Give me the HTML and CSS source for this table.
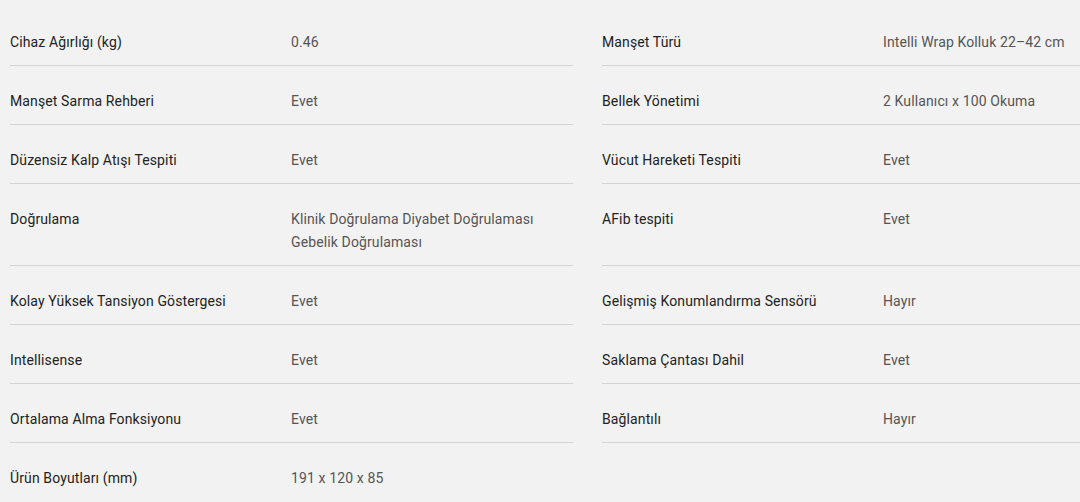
FILE: index.html
```html
<!DOCTYPE html>
<html lang="tr">
<head>
    <meta charset="UTF-8">
    <meta name="viewport" content="width=device-width, initial-scale=1.0">
    <title>Teknik Özellikler</title>
    <link rel="stylesheet" href="styles.css">
</head>
<body>
    <div class="specs">
        <div class="spec-col">
            <div class="spec-row"><div class="spec-label">Cihaz Ağırlığı (kg)</div><div class="spec-value">0.46</div></div>
            <div class="spec-row"><div class="spec-label">Manşet Sarma Rehberi</div><div class="spec-value">Evet</div></div>
            <div class="spec-row"><div class="spec-label">Düzensiz Kalp Atışı Tespiti</div><div class="spec-value">Evet</div></div>
            <div class="spec-row"><div class="spec-label">Doğrulama</div><div class="spec-value">Klinik Doğrulama Diyabet Doğrulaması<br>Gebelik Doğrulaması</div></div>
            <div class="spec-row"><div class="spec-label">Kolay Yüksek Tansiyon Göstergesi</div><div class="spec-value">Evet</div></div>
            <div class="spec-row"><div class="spec-label">Intellisense</div><div class="spec-value">Evet</div></div>
            <div class="spec-row"><div class="spec-label">Ortalama Alma Fonksiyonu</div><div class="spec-value">Evet</div></div>
            <div class="spec-row last"><div class="spec-label">Ürün Boyutları (mm)</div><div class="spec-value">191 x 120 x 85</div></div>
        </div>
        <div class="spec-col">
            <div class="spec-row"><div class="spec-label">Manşet Türü</div><div class="spec-value">Intelli Wrap Kolluk 22–42 cm</div></div>
            <div class="spec-row"><div class="spec-label">Bellek Yönetimi</div><div class="spec-value">2 Kullanıcı x 100 Okuma</div></div>
            <div class="spec-row"><div class="spec-label">Vücut Hareketi Tespiti</div><div class="spec-value">Evet</div></div>
            <div class="spec-row tall"><div class="spec-label">AFib tespiti</div><div class="spec-value">Evet</div></div>
            <div class="spec-row"><div class="spec-label">Gelişmiş Konumlandırma Sensörü</div><div class="spec-value">Hayır</div></div>
            <div class="spec-row"><div class="spec-label">Saklama Çantası Dahil</div><div class="spec-value">Evet</div></div>
            <div class="spec-row"><div class="spec-label">Bağlantılı</div><div class="spec-value">Hayır</div></div>
        </div>
    </div>
</body>
</html>
```

FILE: styles.css
```css
body, html {
    margin: 0;
    padding: 0;
    background-color: #f2f2f2;
    font-family: Roboto, "Liberation Sans", sans-serif;
    overflow: hidden;
}
.specs {
    display: grid;
    grid-template-columns: 563px 1fr;
    column-gap: 29px;
    padding: 7px 0 0 10px;
    width: 1080px;
    box-sizing: border-box;
    overflow: hidden;
}
.spec-row {
    display: grid;
    grid-template-columns: 281px 1fr;
    padding: 24px 0 11px;
    border-bottom: 1px solid #d4d4d4;
    font-size: 14px;
    line-height: 23px;
    letter-spacing: 0.12px;
}
.spec-row.tall {
    height: 46px;
}
.spec-row.last {
    border-bottom: none;
}
.spec-label {
    color: #222;
}
.spec-value {
    color: #555;
    white-space: nowrap;
}
```
